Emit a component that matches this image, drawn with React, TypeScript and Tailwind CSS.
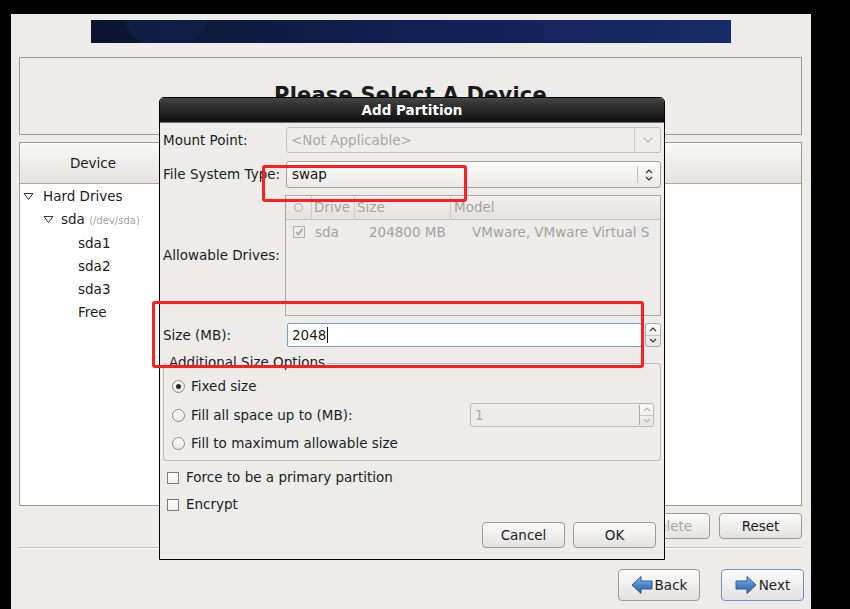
import React from "react";

const Tri = () => (
  <svg width="11" height="9" viewBox="0 0 11 9" className="shrink-0">
    <path d="M1 1.5 L10 1.5 L5.5 7.5 Z" fill="none" stroke="#3a3a3a" strokeWidth="1" strokeLinejoin="round" />
  </svg>
);

const ChevDown = ({ color = "#b4b2af" }: { color?: string }) => (
  <svg width="10" height="6" viewBox="0 0 10 6">
    <path d="M1 1 L5 5 L9 1" fill="none" stroke={color} strokeWidth="1.2" />
  </svg>
);

const UpDown = ({ color = "#2e2e2e", w = 8, h = 14 }: { color?: string; w?: number; h?: number }) => (
  <svg width={w} height={h} viewBox="0 0 8 14">
    <path d="M1 5 L4 2 L7 5" fill="none" stroke={color} strokeWidth="1.2" />
    <path d="M1 9 L4 12 L7 9" fill="none" stroke={color} strokeWidth="1.2" />
  </svg>
);

const Spin = ({ color, className }: { color: string; className: string }) => (
  <div className={`flex flex-col border border-[#aeaba7] rounded-[3px] bg-gradient-to-b from-[#fafafa] to-[#e6e5e3] ${className}`}>
    <div className="flex-1 flex items-center justify-center border-b border-[#c8c6c3]">
      <svg width="8" height="5" viewBox="0 0 8 5"><path d="M1 4 L4 1 L7 4" fill="none" stroke={color} strokeWidth="1.1" /></svg>
    </div>
    <div className="flex-1 flex items-center justify-center">
      <svg width="8" height="5" viewBox="0 0 8 5"><path d="M1 1 L4 4 L7 1" fill="none" stroke={color} strokeWidth="1.1" /></svg>
    </div>
  </div>
);

const Radio = ({ checked }: { checked?: boolean }) => (
  <div className="w-[13px] h-[13px] rounded-full border border-[#8d8a86] bg-gradient-to-b from-white to-[#e9e8e6] flex items-center justify-center shrink-0">
    {checked && <div className="w-[5px] h-[5px] rounded-full bg-[#2a2a2a]" />}
  </div>
);

const Check = () => (
  <div className="w-[12px] h-[12px] border border-[#7f7c79] bg-gradient-to-b from-white to-[#f0efee] shrink-0" />
);

const Btn = ({ children, className = "" }: { children: React.ReactNode; className?: string }) => (
  <div className={`flex items-center justify-center border border-[#9d9a96] rounded-[4px] bg-gradient-to-b from-[#fbfbfb] to-[#e3e2e0] ${className}`}>
    {children}
  </div>
);

const ArrowLeft = () => (
  <svg width="22" height="20" viewBox="0 0 22 20">
    <defs>
      <linearGradient id="ag1" x1="0" y1="0" x2="0" y2="1">
        <stop offset="0" stopColor="#8fbbe8" />
        <stop offset="0.5" stopColor="#4c86c8" />
        <stop offset="1" stopColor="#2a5fa3" />
      </linearGradient>
    </defs>
    <path d="M1 10 L10 1.5 L10 6 L21 6 L21 14 L10 14 L10 18.5 Z" fill="url(#ag1)" stroke="#2c5a96" strokeWidth="1" strokeLinejoin="round" />
  </svg>
);

const ArrowRight = () => (
  <svg width="22" height="20" viewBox="0 0 22 20">
    <defs>
      <linearGradient id="ag2" x1="0" y1="0" x2="0" y2="1">
        <stop offset="0" stopColor="#8fbbe8" />
        <stop offset="0.5" stopColor="#4c86c8" />
        <stop offset="1" stopColor="#2a5fa3" />
      </linearGradient>
    </defs>
    <path d="M21 10 L12 1.5 L12 6 L1 6 L1 14 L12 14 L12 18.5 Z" fill="url(#ag2)" stroke="#2c5a96" strokeWidth="1" strokeLinejoin="round" />
  </svg>
);

export default function App() {
  return (
    <div
      className="relative w-[850px] h-[609px] bg-black overflow-hidden text-[13.5px] text-[#1c1c1c]"
      style={{ fontFamily: '"DejaVu Sans", Verdana, sans-serif' }}
    >
      {/* main window */}
      <div className="ml-[11px] pt-[14px] w-[800px]">
        <div className="h-[595px] bg-[#edeceb] flex flex-col pl-[8px] pr-[9px]">
          {/* banner */}
          <div className="mt-[6px] ml-[72px] w-[640px] h-[23px] relative overflow-hidden bg-gradient-to-r from-[#0b1530] via-[#112052] to-[#172b69]">
            <div className="absolute left-[30px] top-[-60px] w-[90px] h-[90px] rounded-full bg-[#14224c] opacity-60" />
          </div>

          {/* header box */}
          <div className="mt-[14px] h-[78px] border border-[#9c9a98] flex items-center justify-center">
            <span className="text-[21px] font-bold text-[#1a1a1a] tracking-[0.2px]">Please Select A Device</span>
          </div>

          {/* tree */}
          <div className="mt-[7px] h-[364px] border border-[#9c9a98] bg-white flex flex-col">
            <div className="h-[41px] pt-[1px] flex border-b border-[#a9a7a4] bg-gradient-to-b from-[#f8f8f8] to-[#e4e3e1]">
              <div className="w-[147px] flex items-center justify-center border-r border-[#c2c0bd]">Device</div>
              <div className="w-[150px] border-r border-[#c2c0bd]" />
              <div className="flex-1" />
            </div>
            <div className="flex flex-col pt-[1px]">
              <div className="h-[23px] flex items-center pl-[3px] gap-[9px]">
                <Tri />
                <span>Hard Drives</span>
              </div>
              <div className="h-[23px] flex items-center pl-[23px] gap-[7px]">
                <Tri />
                <span>
                  sda <span className="text-[10px] text-[#a6a4a1]">(/dev/sda)</span>
                </span>
              </div>
              <div className="h-[23px] pt-[1px] flex items-center pl-[58px]">sda1</div>
              <div className="h-[23px] pt-[1px] flex items-center pl-[58px]">sda2</div>
              <div className="h-[23px] pt-[1px] flex items-center pl-[58px]">sda3</div>
              <div className="h-[23px] pt-[1px] flex items-center pl-[58px]">Free</div>
            </div>
          </div>

          {/* buttons */}
          <div className="mt-[7px] h-[26px] flex justify-end gap-[9px]">
            <Btn className="w-[80px] text-[#a9a7a4]">Delete</Btn>
            <Btn className="w-[83px]">Reset</Btn>
          </div>

          <div className="mt-[8px] h-px bg-[#c6c4c1]" />
          <div className="h-px bg-[#f8f8f8]" />

          <div className="mt-[20px] h-[32px] flex justify-end gap-[21px] mr-[-2px]">
            <Btn className="w-[82px] gap-[2px]">
              <ArrowLeft />
              <span>Back</span>
            </Btn>
            <Btn className="w-[83px] gap-[2px] !border-[#6d93c6]">
              <ArrowRight />
              <span>Next</span>
            </Btn>
          </div>
        </div>
      </div>

      {/* dialog */}
      <div className="absolute left-[159px] top-[97px] w-[506px] h-[463px] border border-black bg-[#edeceb] rounded-t-[5px] overflow-hidden flex flex-col">
        <div className="h-[24px] shrink-0 bg-gradient-to-b from-[#454545] via-[#262626] to-[#101010] flex items-center justify-center text-white font-bold text-[13.5px]">
          Add Partition
        </div>
        <div className="h-px bg-[#5d7593]" />

        <div className="flex flex-col pl-[3px] pr-[3px]">
          {/* mount point */}
          <div className="mt-[4px] flex items-center h-[26px]">
            <div className="w-[123px]">Mount Point:</div>
            <div className="flex-1 h-full flex border border-[#c3c0bc] rounded-[3px] bg-[#eeedec]">
              <div className="flex-1 flex items-center pl-[4px] text-[#aaa8a5]">&lt;Not Applicable&gt;</div>
              <div className="w-[26px] border-l border-[#d0cdca] flex items-center justify-center">
                <ChevDown />
              </div>
            </div>
          </div>

          {/* file system type */}
          <div className="mt-[8px] flex items-center h-[27px]">
            <div className="w-[123px] whitespace-nowrap">File System Type:</div>
            <div className="flex-1 h-full flex border border-[#a6a39f] rounded-[3px] bg-gradient-to-b from-[#fdfdfd] to-[#eae9e7]">
              <div className="flex-1 flex items-center pl-[5px] text-[#111]">swap</div>
              <div className="my-[4px] w-px bg-[#c4c2bf]" />
              <div className="w-[22px] flex items-center justify-center">
                <UpDown />
              </div>
            </div>
          </div>

          {/* allowable drives */}
          <div className="mt-[7px] flex items-center h-[121px]">
            <div className="w-[122px] whitespace-nowrap">Allowable Drives:</div>
            <div className="flex-1 h-full border border-[#aaa8a5] flex flex-col bg-[#edeceb]">
              <div className="h-[24px] flex items-center border-b border-[#c7c5c2] bg-gradient-to-b from-[#f2f1f0] to-[#e2e1df] text-[#a6a4a1]">
                <div className="w-[26px] h-full flex items-center justify-center border-r border-[#cfcdca]">
                  <div className="w-[9px] h-[9px] rounded-full border border-[#b0aeab]" />
                </div>
                <div className="w-[43px] h-full flex items-center pl-[2px] border-r border-[#cfcdca]">Drive</div>
                <div className="w-[96px] h-full flex items-center pl-[2px] border-r border-[#cfcdca]">Size</div>
                <div className="flex-1 h-full flex items-center pl-[3px]">Model</div>
              </div>
              <div className="h-[24px] flex items-center text-[#a3a19e]">
                <div className="w-[26px] flex items-center justify-center">
                  <div className="w-[12px] h-[12px] border border-[#b2b0ad] flex items-center justify-center">
                    <svg width="10" height="10" viewBox="0 0 10 10"><path d="M2 5 L4.2 7.5 L8.5 2" fill="none" stroke="#9e9c99" strokeWidth="1.5" /></svg>
                  </div>
                </div>
                <div className="w-[54px] pl-[3px]">sda</div>
                <div className="w-[106px] pl-[3px] whitespace-nowrap">204800 MB</div>
                <div className="flex-1 whitespace-nowrap overflow-hidden">VMware, VMware Virtual S</div>
              </div>
            </div>
          </div>

          {/* size */}
          <div className="mt-[7px] flex items-center h-[24px]">
            <div className="w-[124px]">Size (MB):</div>
            <div className="w-[355px] h-full flex items-center border border-[#7f9cc4] rounded-[2px] bg-white pl-[4px]">
              <span>2048</span>
              <span className="w-px h-[16px] bg-black ml-[1px]" />
            </div>
            <Spin color="#333" className="ml-[3px] w-[16px] h-full" />
          </div>

          {/* additional size options */}
          <div className="relative mt-[16px] h-[98px] border border-[#bcbab6] rounded-[3px] pt-[8px] pl-[8px] pr-[6px] flex flex-col">
            <div className="absolute left-[3px] top-[-10px] px-[2px] bg-[#edeceb] leading-[16px]">Additional Size Options</div>
            <div className="h-[29px] flex items-center gap-[6px]">
              <Radio checked />
              <span>Fixed size</span>
            </div>
            <div className="h-[28px] flex items-center gap-[6px]">
              <Radio />
              <span>Fill all space up to (MB):</span>
              <div className="ml-auto flex h-[24px] w-[184px] border border-[#bdbab6] rounded-[3px] bg-[#edeceb]">
                <div className="flex-1 flex items-center pl-[4px] text-[#aeaca9]">1</div>
                <Spin color="#b7b5b2" className="w-[14px] !border-0 !border-l !rounded-none my-[1px]" />
              </div>
            </div>
            <div className="h-[28px] flex items-center gap-[6px]">
              <Radio />
              <span>Fill to maximum allowable size</span>
            </div>
          </div>

          <div className="mt-[3px] h-[27px] flex items-center gap-[7px] pl-[4px]">
            <Check />
            <span>Force to be a primary partition</span>
          </div>
          <div className="h-[27px] flex items-center gap-[7px] pl-[4px]">
            <Check />
            <span>Encrypt</span>
          </div>

          <div className="mt-[4px] flex justify-end gap-[8px] pr-[5px]">
            <Btn className="w-[83px] h-[26px]">Cancel</Btn>
            <Btn className="w-[83px] h-[26px]">OK</Btn>
          </div>
        </div>
      </div>

      {/* red annotation rectangles */}
      <div className="absolute left-[262px] top-[165px] w-[205px] h-[37px] border-[3px] border-[#ff1f1f] rounded-[3px]" />
      <div className="absolute left-[152px] top-[301px] w-[492px] h-[67px] border-[3px] border-[#ff1f1f] rounded-[3px]" />
    </div>
  );
}
